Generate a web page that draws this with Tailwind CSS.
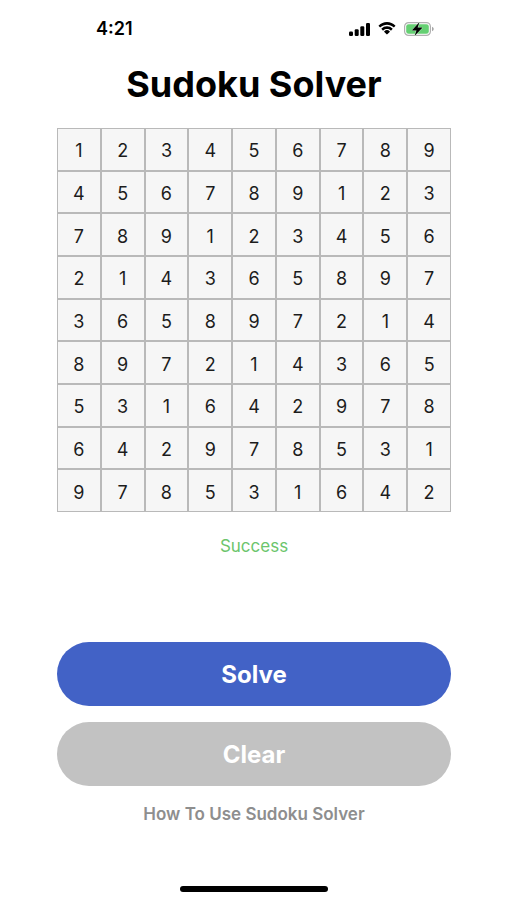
<!DOCTYPE html>
<html lang="en">
<head>
<meta charset="utf-8">
<meta name="viewport" content="width=device-width, initial-scale=1">
<title>Sudoku Solver</title>
<script src="https://cdn.jsdelivr.net/npm/@tailwindcss/browser@4"></script>
</head>
<body class="bg-white text-black font-['Inter','Liberation_Sans',sans-serif]">
<div class="flex min-h-screen flex-col">
  <header class="flex h-14 items-center justify-between pt-0.5 pl-24 pr-[73px]">
    <time class="text-[18px] leading-6 font-semibold">4:21</time>
    <div class="flex items-center gap-2">
      <svg class="h-[13px] w-[21px]" viewBox="0 0 21 13" role="img" aria-label="Signal">
        <rect x="0" y="8.500" width="4" height="4.500" rx="1.200"/>
        <rect x="5.700" y="6.200" width="4" height="6.800" rx="1.200"/>
        <rect x="11.300" y="3.300" width="4" height="9.700" rx="1.200"/>
        <rect x="17" y="0" width="4" height="13" rx="1.200"/>
      </svg>
      <svg class="h-[14px] w-[18px]" viewBox="0 0 18 14" role="img" aria-label="Wi-Fi">
        <path d="M9 2.700c2.500 0 4.800 1 6.500 2.600.2.200.4.200.6 0l1.200-1.300c.2-.2.200-.4 0-.6C15.100 1.300 12.200 0 9 0S2.900 1.300.7 3.400c-.2.200-.2.400 0 .6l1.200 1.300c.2.200.4.200.6 0C4.200 3.700 6.500 2.700 9 2.700z"/>
        <path d="M9 7c1.400 0 2.600.5 3.600 1.400.2.200.4.200.6 0l1.300-1.300c.2-.2.200-.5 0-.7A8 8 0 0 0 9 4.300a8 8 0 0 0-5.500 2.100c-.2.200-.2.500 0 .7l1.300 1.300c.2.200.4.200.6 0C6.400 7.500 7.600 7 9 7z"/>
        <path d="M11.700 9.900c.2-.2.200-.5 0-.7a4.200 4.200 0 0 0-5.400 0c-.2.200-.2.500 0 .7l2.300 2.400c.2.200.5.200.7 0z"/>
      </svg>
      <svg class="h-[16px] w-[30px]" viewBox="0 0 30 16" role="img" aria-label="Battery charging">
        <rect x=".6" y="1.600" width="25.800" height="12.800" rx="4" fill="#fff" stroke="#b0b0b0" stroke-width="1.200"/>
        <rect x="2.200" y="3.200" width="22.600" height="9.600" rx="2.400" fill="#65d073"/>
        <path d="M28 5.700c1.200.5 1.700 1.300 1.700 2.300s-.5 1.800-1.700 2.300z" fill="#a6a6a6"/>
        <path d="M15.600 1 8.400 8.700c-.3.300-.1.700.3.700h3.800l-2 5.600 7.400-7.700c.3-.3.100-.7-.3-.7h-4z" stroke="#c9efcf" stroke-width="1" paint-order="stroke"/>
      </svg>
    </div>
  </header>

  <main class="flex flex-1 flex-col items-stretch pl-[57px] pr-[56px]">
    <h1 class="pt-1 text-center text-[36px] leading-[48px] font-bold">Sudoku Solver</h1>

    <form class="mt-5 flex flex-col">
      <div id="board" class="grid h-96 grid-cols-9 grid-rows-9" role="group" aria-label="Sudoku board"></div>
      <output class="mt-5 block pt-0.5 text-center text-[17px] leading-6 text-[#6cc56c]">Success</output>
      <button type="button" class="mt-[84px] h-16 rounded-full bg-[#4262c6] pt-0.5 text-[24px] leading-8 font-bold text-white">Solve</button>
      <button type="reset" class="mt-4 h-16 rounded-full bg-[#c2c2c2] pt-0.5 text-[24px] leading-8 font-bold text-white">Clear</button>
    </form>

    <a href="#help" class="mt-4 self-center text-[17px] leading-6 font-semibold text-[#8e8e8e]">How To Use Sudoku Solver</a>
  </main>

  <footer class="flex justify-center pb-2">
    <div class="h-[6px] w-[148px] rounded-full bg-black"></div>
  </footer>
</div>

<script>
  const rows = [
    "123456789",
    "456789123",
    "789123456",
    "214365897",
    "365897214",
    "897214365",
    "531642978",
    "642978531",
    "978531642",
  ];
  const board = document.getElementById("board");
  rows.forEach((row, r) => {
    [...row].forEach((digit, c) => {
      const cell = document.createElement("input");
      cell.type = "text";
      cell.inputMode = "numeric";
      cell.maxLength = 1;
      cell.value = digit;
      cell.setAttribute("aria-label", `Row ${r + 1}, column ${c + 1}`);
      cell.className = "min-w-0 border border-[#b9b9b9] bg-[#f6f6f6] pt-1 text-center text-[18px] leading-6 text-[#1c1c1c]";
      board.append(cell);
    });
  });
</script>
</body>
</html>
